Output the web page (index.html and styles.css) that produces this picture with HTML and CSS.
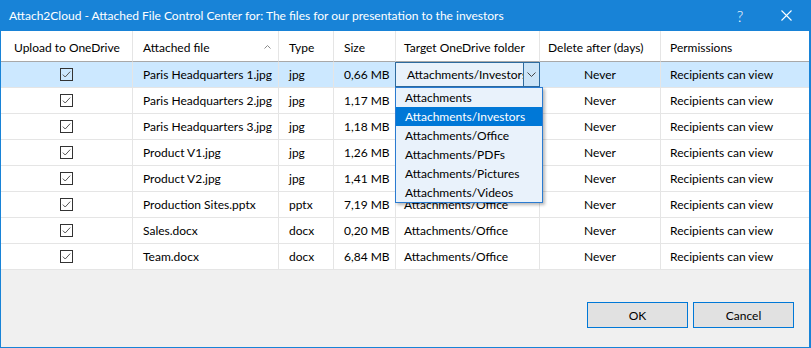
FILE: index.html
```html
<!DOCTYPE html>
<html>
<head>
<meta charset="utf-8">
<link rel="stylesheet" href="styles.css">
</head>
<body>
<div class="window">
  <div class="titlebar">
    <span class="title">Attach2Cloud - Attached File Control Center for: The files for our presentation to the investors</span>
    <span class="tb-btn help">?</span>
    <span class="tb-btn close"><svg width="11" height="11" viewBox="0 0 11 11"><path d="M0.5 0.5L10.5 10.5M10.5 0.5L0.5 10.5" stroke="#fff" stroke-width="1.1" fill="none"/></svg></span>
  </div>

  <div class="table">
    <div class="c h first">Upload to OneDrive</div>
    <div class="c h">Attached file<svg class="sort" width="7" height="4" viewBox="0 0 7 4"><path d="M0.5 3.5L3.5 0.5L6.5 3.5" stroke="#8a8a8a" fill="none"/></svg></div>
    <div class="c h">Type</div>
    <div class="c h">Size</div>
    <div class="c h p8">Target OneDrive folder</div>
    <div class="c h p8">Delete after (days)</div>
    <div class="c h p9">Permissions</div>

    <div class="c sel center"><span class="chk"><svg width="13" height="13" viewBox="0 0 13 13"><rect x="0.5" y="0.5" width="12" height="12" fill="none" stroke="#333"/><path d="M2.8 6.6L5.2 9L10.2 3.6" stroke="#555" fill="none"/></svg></span></div>
    <div class="c sel">Paris Headquarters 1.jpg</div>
    <div class="c sel">jpg</div>
    <div class="c sel">0,66 MB</div>
    <div class="c sel combo-cell">
      <div class="combo">
        <div class="combo-text">Attachments/Investors</div>
        <div class="combo-btn"><svg width="9" height="5" viewBox="0 0 9 5"><path d="M0.5 0.5L4.5 4.5L8.5 0.5" stroke="#444" fill="none"/></svg></div>
      </div>
    </div>
    <div class="c sel center">Never</div>
    <div class="c sel p9">Recipients can view</div>

    <div class="c center"><span class="chk"><svg width="13" height="13" viewBox="0 0 13 13"><rect x="0.5" y="0.5" width="12" height="12" fill="none" stroke="#333"/><path d="M2.8 6.6L5.2 9L10.2 3.6" stroke="#555" fill="none"/></svg></span></div>
    <div class="c">Paris Headquarters 2.jpg</div>
    <div class="c">jpg</div>
    <div class="c">1,17 MB</div>
    <div class="c p8">Attachments/Office</div>
    <div class="c center">Never</div>
    <div class="c p9">Recipients can view</div>

    <div class="c center"><span class="chk"><svg width="13" height="13" viewBox="0 0 13 13"><rect x="0.5" y="0.5" width="12" height="12" fill="none" stroke="#333"/><path d="M2.8 6.6L5.2 9L10.2 3.6" stroke="#555" fill="none"/></svg></span></div>
    <div class="c">Paris Headquarters 3.jpg</div>
    <div class="c">jpg</div>
    <div class="c">1,18 MB</div>
    <div class="c p8">Attachments/Office</div>
    <div class="c center">Never</div>
    <div class="c p9">Recipients can view</div>

    <div class="c center"><span class="chk"><svg width="13" height="13" viewBox="0 0 13 13"><rect x="0.5" y="0.5" width="12" height="12" fill="none" stroke="#333"/><path d="M2.8 6.6L5.2 9L10.2 3.6" stroke="#555" fill="none"/></svg></span></div>
    <div class="c">Product V1.jpg</div>
    <div class="c">jpg</div>
    <div class="c">1,26 MB</div>
    <div class="c p8">Attachments/Office</div>
    <div class="c center">Never</div>
    <div class="c p9">Recipients can view</div>

    <div class="c center"><span class="chk"><svg width="13" height="13" viewBox="0 0 13 13"><rect x="0.5" y="0.5" width="12" height="12" fill="none" stroke="#333"/><path d="M2.8 6.6L5.2 9L10.2 3.6" stroke="#555" fill="none"/></svg></span></div>
    <div class="c">Product V2.jpg</div>
    <div class="c">jpg</div>
    <div class="c">1,41 MB</div>
    <div class="c p8">Attachments/Office</div>
    <div class="c center">Never</div>
    <div class="c p9">Recipients can view</div>

    <div class="c center"><span class="chk"><svg width="13" height="13" viewBox="0 0 13 13"><rect x="0.5" y="0.5" width="12" height="12" fill="none" stroke="#333"/><path d="M2.8 6.6L5.2 9L10.2 3.6" stroke="#555" fill="none"/></svg></span></div>
    <div class="c">Production Sites.pptx</div>
    <div class="c">pptx</div>
    <div class="c">7,19 MB</div>
    <div class="c p8">Attachments/Office</div>
    <div class="c center">Never</div>
    <div class="c p9">Recipients can view</div>

    <div class="c center"><span class="chk"><svg width="13" height="13" viewBox="0 0 13 13"><rect x="0.5" y="0.5" width="12" height="12" fill="none" stroke="#333"/><path d="M2.8 6.6L5.2 9L10.2 3.6" stroke="#555" fill="none"/></svg></span></div>
    <div class="c">Sales.docx</div>
    <div class="c">docx</div>
    <div class="c">0,20 MB</div>
    <div class="c p8">Attachments/Office</div>
    <div class="c center">Never</div>
    <div class="c p9">Recipients can view</div>

    <div class="c center"><span class="chk"><svg width="13" height="13" viewBox="0 0 13 13"><rect x="0.5" y="0.5" width="12" height="12" fill="none" stroke="#333"/><path d="M2.8 6.6L5.2 9L10.2 3.6" stroke="#555" fill="none"/></svg></span></div>
    <div class="c">Team.docx</div>
    <div class="c">docx</div>
    <div class="c">6,84 MB</div>
    <div class="c p8">Attachments/Office</div>
    <div class="c center">Never</div>
    <div class="c p9">Recipients can view</div>
  </div>

  <div class="footer">
    <button class="btn">OK</button>
    <button class="btn">Cancel</button>
  </div>

  <ul class="dropdown">
    <li>Attachments</li>
    <li class="hi">Attachments/Investors</li>
    <li>Attachments/Office</li>
    <li>Attachments/PDFs</li>
    <li>Attachments/Pictures</li>
    <li>Attachments/Videos</li>
  </ul>
</div>
</body>
</html>
```

FILE: styles.css
```css
html, body {
  margin: 0;
  padding: 0;
}
body {
  width: 811px;
  height: 348px;
  overflow: hidden;
  background: #fff;
}
.window {
  position: relative;
  box-sizing: border-box;
  width: 811px;
  height: 348px;
  border-style: solid;
  border-color: #1883d7;
  border-width: 0 2px 1px 1px;
  display: flex;
  flex-direction: column;
  font-family: Lato, "Liberation Sans", sans-serif;
  font-size: 12px;
  color: #000;
  background: #fff;
}
.titlebar {
  height: 31px;
  flex: none;
  background: #1883d7;
  color: #fff;
  display: flex;
  align-items: center;
  padding-left: 8px;
}
.title {
  flex: 1;
  white-space: nowrap;
}
.tb-btn {
  width: 46px;
  height: 31px;
  display: flex;
  align-items: center;
  justify-content: center;
}
.help {
  font-size: 15px;
  font-weight: 300;
}
.table {
  display: grid;
  grid-template-columns: 132px 146px 55px 62px 144px 121px 1fr;
  grid-template-rows: 31px repeat(8, 26px);
  flex: none;
}
.c {
  box-sizing: border-box;
  min-width: 0;
  border-right: 1px solid #e5e5e5;
  border-bottom: 1px solid #e5e5e5;
  display: flex;
  align-items: center;
  padding-left: 10px;
  white-space: nowrap;
  overflow: hidden;
}
.c:nth-child(7n) {
  border-right: none;
}
.h {
  border-bottom-color: #a8a8a8;
  padding-top: 2px;
}
.h.first {
  padding-left: 13px;
}
.p8 { padding-left: 8px; }
.p9 { padding-left: 9px; }
.center {
  justify-content: center;
  padding-left: 0;
}
.sel {
  background: #cce8ff;
}
.sort {
  margin-left: auto;
  margin-right: 7px;
}
.chk {
  display: flex;
  width: 13px;
  height: 13px;
}
.combo-cell {
  padding-left: 0;
  overflow: visible;
  align-items: stretch;
}
.combo {
  flex: 1;
  min-width: 0;
  display: flex;
  margin: 0 -1px;
}
.combo-text {
  flex: 1;
  min-width: 0;
  box-sizing: border-box;
  background: #e9f2fb;
  border: 1px solid #2e6b9e;
  border-right: none;
  padding-left: 11px;
  padding-right: 2px;
  display: flex;
  align-items: center;
  overflow: hidden;
  white-space: nowrap;
}
.combo-btn {
  flex: none;
  width: 17px;
  box-sizing: border-box;
  background: #cce4f7;
  border: 1px solid #2e6b9e;
  display: flex;
  align-items: center;
  justify-content: center;
}
.footer {
  flex: 1;
  background: #f0f0f0;
  display: flex;
  justify-content: flex-end;
  align-items: flex-start;
  gap: 5px;
  padding: 32px 15px 0 0;
}
.btn {
  width: 101px;
  height: 26px;
  box-sizing: border-box;
  border: 1px solid #0078d7;
  background: #e1e1e1;
  font-family: Lato, "Liberation Sans", sans-serif;
  font-size: 12px;
  color: #000;
  padding: 0;
}
.dropdown {
  position: absolute;
  left: 394px;
  top: 87px;
  width: 148px;
  box-sizing: border-box;
  margin: 0;
  padding: 0;
  list-style: none;
  background: #e9f2fb;
  border: 1px solid #2a7bd1;
  box-shadow: 2px 2px 3px rgba(0, 0, 0, 0.28);
}
.dropdown li {
  height: 19px;
  line-height: 19px;
  padding-left: 9px;
  white-space: nowrap;
}
.dropdown li.hi {
  background: #0078d7;
  color: #fff;
}
```
